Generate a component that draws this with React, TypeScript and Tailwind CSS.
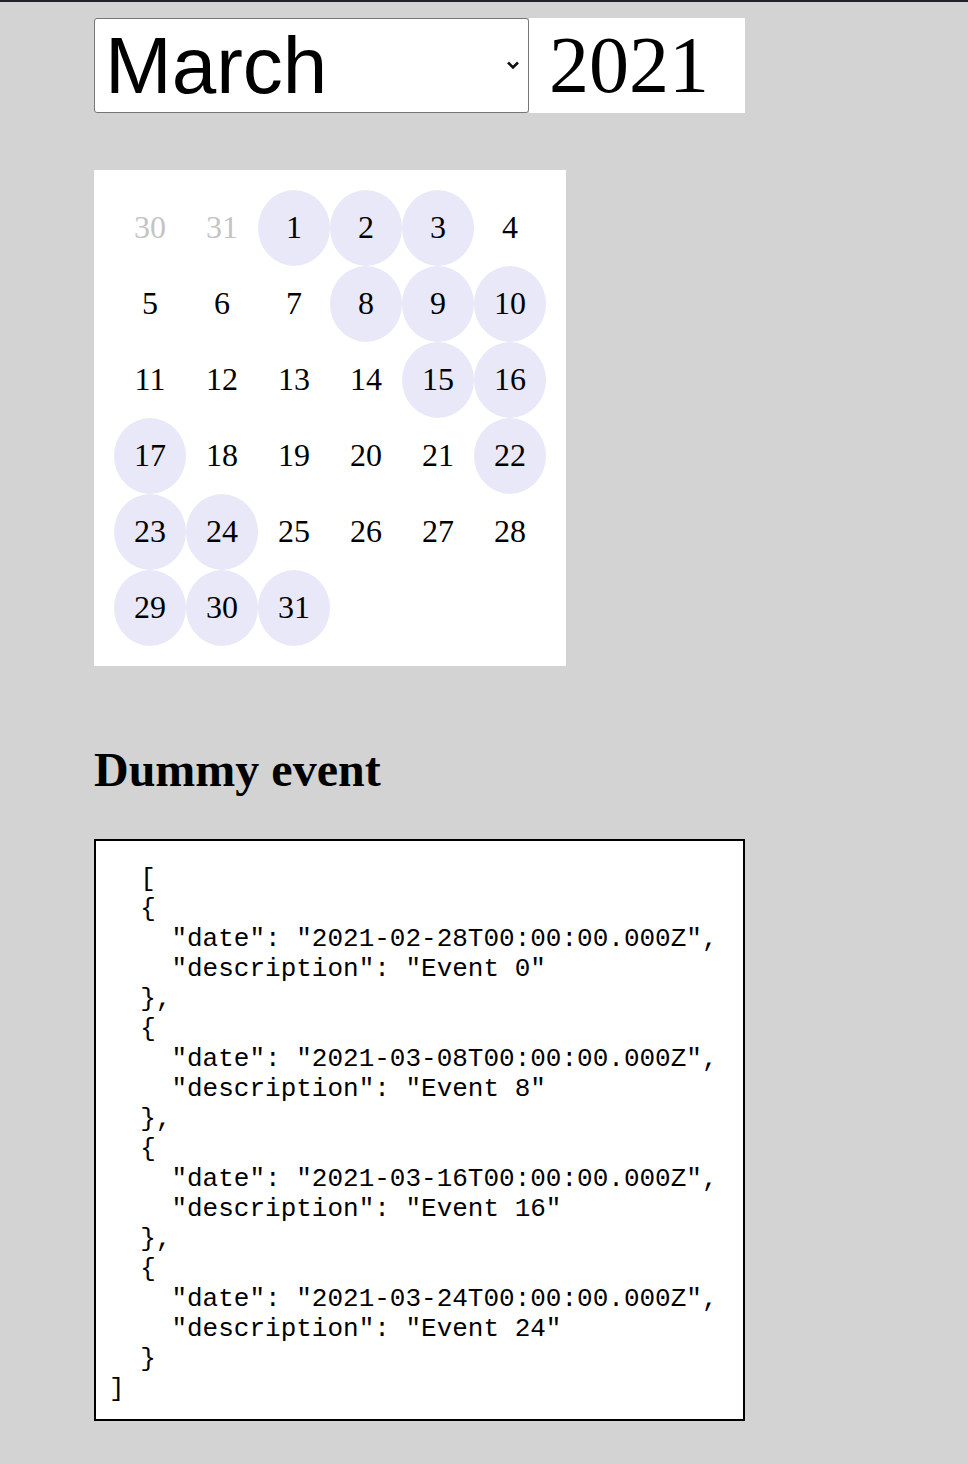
import { useState } from 'react';

const MONTHS = [
  'January', 'February', 'March', 'April', 'May', 'June',
  'July', 'August', 'September', 'October', 'November', 'December',
];

const EVENTS = [
  { date: '2021-02-28T00:00:00.000Z', description: 'Event 0' },
  { date: '2021-03-08T00:00:00.000Z', description: 'Event 8' },
  { date: '2021-03-16T00:00:00.000Z', description: 'Event 16' },
  { date: '2021-03-24T00:00:00.000Z', description: 'Event 24' },
];

// highlighted days in march
const MARKED = [1, 2, 3, 8, 9, 10, 15, 16, 17, 22, 23, 24, 29, 30, 31];

type Day = { day: number; outside: boolean };

function buildDays(): Day[] {
  const days: Day[] = [
    { day: 30, outside: true },
    { day: 31, outside: true },
  ];
  for (let d = 1; d <= 31; d++) days.push({ day: d, outside: false });
  return days;
}

export default function App() {
  const [month, setMonth] = useState('March');
  const days = buildDays();

  return (
    <div className="min-h-screen bg-[#d3d3d3] border-t-2 border-[#1f2226] pl-[94px] pt-[16px] pb-[44px]">
      {/* Month / year picker */}
      <div className="flex items-stretch h-[95px]">
        <div className="relative w-[435px] h-full">
          <select
            value={month}
            onChange={(e) => setMonth(e.target.value)}
            className="appearance-none w-full h-full bg-white border border-[#767676] rounded-[3px] pl-[10px] text-[80px] leading-[92px] text-black outline-none"
            style={{ fontFamily: '"Liberation Sans", Arial, sans-serif' }}
          >
            {MONTHS.map((m) => (
              <option key={m} value={m}>{m}</option>
            ))}
          </select>
          <svg
            className="absolute right-[9px] top-[42px] pointer-events-none"
            width="14"
            height="10"
            viewBox="0 0 14 10"
          >
            <path d="M2 2.5 L7 7.5 L12 2.5" fill="none" stroke="#111" strokeWidth="2.6" />
          </svg>
        </div>
        <input
          readOnly
          value="2021"
          className="w-[216px] h-full bg-white pl-[20px] text-[80px] text-black outline-none"
          style={{ fontFamily: '"Liberation Serif", "Times New Roman", serif' }}
        />
      </div>

      {/* Calendar */}
      <div
        className="mt-[57px] w-[472px] bg-white p-[20px] grid grid-cols-[repeat(6,72px)] auto-rows-[76px]"
        style={{ fontFamily: '"Liberation Serif", "Times New Roman", serif' }}
      >
        {days.map((d, i) => {
          const marked = !d.outside && MARKED.includes(d.day);
          return (
            <div
              key={i}
              className={`flex items-center justify-center rounded-[50%] text-[32px] pb-[3px] ${
                marked ? 'bg-[#e8e8f8]' : ''
              } ${d.outside ? 'text-[#c4c4c4]' : 'text-black'}`}
            >
              {d.day}
            </div>
          );
        })}
      </div>

      <h2
        className="mt-[76px] text-[48px] leading-[55px] font-bold text-black"
        style={{ fontFamily: '"Liberation Serif", "Times New Roman", serif' }}
      >
        Dummy event
      </h2>

      {/* Event dump */}
      <pre
        className="mt-[42px] w-[651px] h-[582px] bg-white border-2 border-black pl-[13px] pt-[23px] text-[26px] leading-[30px] text-black"
        style={{ fontFamily: '"Liberation Mono", "Courier New", monospace' }}
      >
        {'  ' + JSON.stringify(EVENTS, null, 2)}
      </pre>
    </div>
  );
}
